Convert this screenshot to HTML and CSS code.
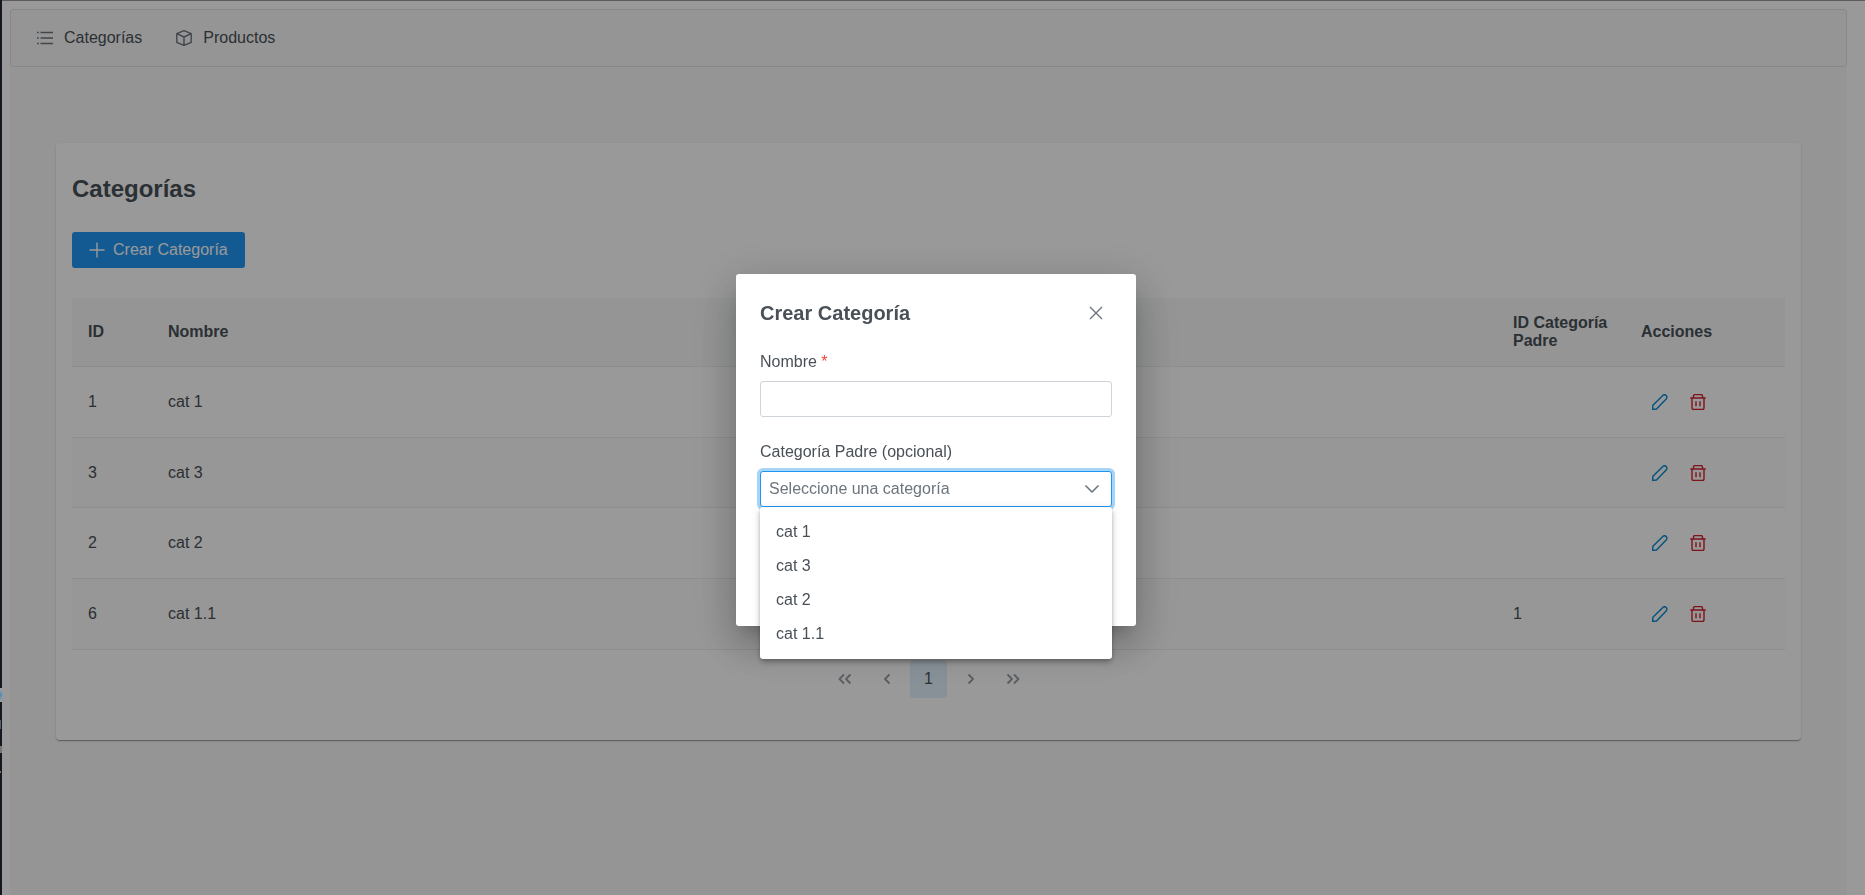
FILE: index.html
```html
<!DOCTYPE html>
<html lang="es">
<head>
<meta charset="utf-8">
<title>Categorías</title>
<link rel="stylesheet" href="styles.css">
</head>
<body>
<svg class="sprite" aria-hidden="true">
  <symbol id="i-list" viewBox="0 0 16 16"><path d="M3.5 2.500h12.500M3.500 8h12.500M3.500 13.500h12.500M0 2.500h1.700M0 8h1.700M0 13.500h1.700"/></symbol>
  <symbol id="i-box" viewBox="0 0 16 16"><path d="M8 .7l7.2 3v8.6L8 15.3l-7.2-3V3.7zM.8 3.7L8 7l7.2-3.300M8 7v8.300"/></symbol>
  <symbol id="i-plus" viewBox="0 0 16 16"><path d="M8 .4v15.200M.4 8h15.200"/></symbol>
  <symbol id="i-pencil" viewBox="0 0 16 16"><path d="M.6 15.400l.3-4.100L11.100 1.200q1.600-1.100 3 .2q1.500 1.400.3 3.300L4.500 15z"/></symbol>
  <symbol id="i-trash" viewBox="0 0 16 16"><path d="M.3 4h15.400M3.500 4V2q0-1.400 1.400-1.400h6.200q1.400 0 1.400 1.400v2M2 4v10q0 1.400 1.400 1.400h9.200q1.400 0 1.400-1.400V4M6 7.200v5M10 7.200v5"/></symbol>
  <symbol id="i-times" viewBox="0 0 16 16"><path d="M2 2l12 12M14 2L2 14"/></symbol>
  <symbol id="i-down" viewBox="0 0 16 16"><path d="M1.500 4.500L8 11l6.500-6.500"/></symbol>
  <symbol id="i-left" viewBox="0 0 16 16"><path d="M10.500 3.500L6 8l4.500 4.500"/></symbol>
  <symbol id="i-right" viewBox="0 0 16 16"><path d="M5.500 3.500L10 8l-4.500 4.500"/></symbol>
  <symbol id="i-first" viewBox="0 0 16 16"><path d="M7 3.500L2.500 8 7 12.500M13.500 3.500L9 8l4.500 4.500"/></symbol>
  <symbol id="i-last" viewBox="0 0 16 16"><path d="M2.500 3.500L7 8l-4.500 4.500M9 3.500L13.500 8 9 12.500"/></symbol>
</svg>
<div class="app">
  <nav class="menubar">
    <a href="#"><svg class="icon"><use href="#i-list"/></svg>Categorías</a>
    <a href="#"><svg class="icon"><use href="#i-box"/></svg>Productos</a>
  </nav>
  <main class="content">
    <section class="card">
      <h1>Categorías</h1>
      <button class="create"><svg class="icon"><use href="#i-plus"/></svg>Crear Categoría</button>
      <table class="table">
        <thead>
          <tr><th class="col-id">ID</th><th>Nombre</th><th class="col-parent">ID Categoría Padre</th><th class="col-actions">Acciones</th></tr>
        </thead>
        <tbody>
          <tr><td>1</td><td>cat 1</td><td></td><td><div class="actions"><button class="edit" aria-label="Editar"><svg class="icon"><use href="#i-pencil"/></svg></button><button class="delete" aria-label="Eliminar"><svg class="icon"><use href="#i-trash"/></svg></button></div></td></tr>
          <tr><td>3</td><td>cat 3</td><td></td><td><div class="actions"><button class="edit" aria-label="Editar"><svg class="icon"><use href="#i-pencil"/></svg></button><button class="delete" aria-label="Eliminar"><svg class="icon"><use href="#i-trash"/></svg></button></div></td></tr>
          <tr><td>2</td><td>cat 2</td><td></td><td><div class="actions"><button class="edit" aria-label="Editar"><svg class="icon"><use href="#i-pencil"/></svg></button><button class="delete" aria-label="Eliminar"><svg class="icon"><use href="#i-trash"/></svg></button></div></td></tr>
          <tr><td>6</td><td>cat 1.1</td><td>1</td><td><div class="actions"><button class="edit" aria-label="Editar"><svg class="icon"><use href="#i-pencil"/></svg></button><button class="delete" aria-label="Eliminar"><svg class="icon"><use href="#i-trash"/></svg></button></div></td></tr>
        </tbody>
      </table>
      <div class="paginator">
        <button aria-label="Primera" disabled><svg class="icon"><use href="#i-first"/></svg></button>
        <button aria-label="Anterior" disabled><svg class="icon"><use href="#i-left"/></svg></button>
        <button class="current">1</button>
        <button aria-label="Siguiente" disabled><svg class="icon"><use href="#i-right"/></svg></button>
        <button aria-label="Última" disabled><svg class="icon"><use href="#i-last"/></svg></button>
      </div>
    </section>
  </main>
</div>
<div class="mask">
  <div class="dialog" role="dialog" aria-labelledby="dialog-title">
    <header class="dialog-header">
      <h2 id="dialog-title">Crear Categoría</h2>
      <button class="close" aria-label="Cerrar"><svg class="icon"><use href="#i-times"/></svg></button>
    </header>
    <div class="field">
      <label for="name">Nombre <span class="required">*</span></label>
      <input id="name" type="text">
    </div>
    <div class="field">
      <label for="parent">Categoría Padre (opcional)</label>
      <div class="dropdown">
        <select id="parent"><option>Seleccione una categoría</option></select>
        <svg class="icon arrow"><use href="#i-down"/></svg>
        <ul class="options" role="listbox">
          <li role="option">cat 1</li>
          <li role="option">cat 3</li>
          <li role="option">cat 2</li>
          <li role="option">cat 1.1</li>
        </ul>
      </div>
    </div>
  </div>
</div>
<div class="edge-left"></div>
<div class="edge-top"></div>
</body>
</html>
```
FILE: styles.css
```css
* { box-sizing: border-box; }
html, body { height: 100%; }
body {
  margin: 0;
  overflow: hidden;
  background: #fff;
  color: #495057;
  font-family: "Liberation Sans", Arial, sans-serif;
  font-size: 16px;
  line-height: 18px;
}
button, input, select { font: inherit; color: inherit; }
button { display: flex; align-items: center; justify-content: center; border: 0; background: none; padding: 0; }
.sprite { position: absolute; width: 0; height: 0; }
.icon { width: 16px; height: 16px; flex: none; fill: none; stroke: currentColor; stroke-width: 1.4; stroke-linejoin: round; }

.app { min-height: 100%; padding: 9px 18px 0 10px; display: flex; flex-direction: column; }
.menubar {
  display: flex;
  align-items: center;
  gap: 2px;
  height: 58px;
  padding: 0 10px;
  background: #f8f9fa;
  border: 1px solid #dee2e6;
  border-radius: 3px;
}
.menubar a { display: flex; align-items: center; gap: 11px; padding: 12px 16px; color: inherit; text-decoration: none; }
.menubar svg { color: #6c757d; }
.content { flex: 1; padding: 76px 46px 0; background: #f8f9fa; }
.card {
  padding: 32px 16px 34px;
  background: #fff;
  border-radius: 4px;
  box-shadow: 0 2px 1px -1px rgba(0, 0, 0, .2), 0 1px 1px 0 rgba(0, 0, 0, .14), 0 1px 3px 0 rgba(0, 0, 0, .12);
}
h1 { margin: 0 0 30px; font-size: 24px; line-height: 27px; }
.create { gap: 8px; height: 36px; padding: 0 17px; background: #2196f3; color: #fff; border-radius: 3px; }

.table { width: 100%; margin-top: 30px; border-collapse: separate; border-spacing: 0; table-layout: fixed; }
.table th, .table td { padding: 0 16px; text-align: left; border-bottom: 1px solid #e9ecef; }
.table th { height: 69px; background: #f8f9fa; }
.table td { height: 71px; }
.table tbody tr:nth-child(even) { background: #fcfcfc; }
.table tbody tr:nth-child(2) td { height: 70px; }
.col-id { width: 80px; }
.col-parent { width: 128px; }
.col-actions { width: 160px; }
.actions { display: flex; }
.actions button { width: 38px; height: 38px; }
.edit { color: #0288d1; }
.delete { color: #d3202c; }
.paginator { display: flex; justify-content: center; gap: 5px; padding: 10px 8px 8px; }
.paginator button { width: 37px; height: 38px; color: #6c757d; border-radius: 3px; }
.paginator button:disabled { opacity: .7; }
.paginator svg { stroke-width: 1.8; }
.paginator .current { background: #e3f2fd; color: #495057; }

.mask {
  position: fixed;
  inset: 0 -5px -5px 2px;
  display: flex;
  align-items: center;
  justify-content: center;
  background: rgba(0, 0, 0, .4);
}
.dialog {
  width: 400px;
  height: 352px;
  padding: 24px;
  background: #fff;
  border-radius: 3px;
  box-shadow: 0 11px 15px -7px rgba(0, 0, 0, .2), 0 24px 38px 3px rgba(0, 0, 0, .14), 0 9px 46px 8px rgba(0, 0, 0, .12);
}
.dialog-header { display: flex; align-items: center; justify-content: space-between; height: 30px; margin-bottom: 25px; }
.dialog-header h2 { margin: 0; font-size: 20px; line-height: 24px; }
.close { width: 32px; height: 32px; color: #6c757d; }
.field { margin-bottom: 26px; }
.field label { display: block; margin-bottom: 10px; }
.required { color: #f44336; }
.field input, .field select { display: block; width: 100%; height: 36px; padding: 0 8px; background: #fff; border: 1px solid #ced4da; border-radius: 3px; outline: 0; }
.dropdown { position: relative; }
.field select { appearance: none; border-color: #2196f3; color: #6c757d; box-shadow: 0 0 0 3px #a6d5fa; }
.arrow { position: absolute; right: 12px; top: 10px; color: #6c757d; stroke-width: 1.6; }
.options {
  position: absolute;
  top: 100%;
  left: 0;
  right: 0;
  margin: 0;
  padding: 8px 0;
  list-style: none;
  background: #fff;
  border-radius: 3px;
  box-shadow: 0 2px 4px -1px rgba(0, 0, 0, .2), 0 4px 5px 0 rgba(0, 0, 0, .14), 0 1px 10px 0 rgba(0, 0, 0, .12);
}
.options li { padding: 8px 16px; }
.edge-left {
  position: fixed;
  inset: 0 auto 0 0;
  width: 2px;
  background:
    linear-gradient(#a9a29a, #4a90b8 50%, #a9a29a) 0 688px / 2px 14px no-repeat,
    linear-gradient(#5b6070, #5b6070) 0 720px / 1px 9px no-repeat,
    linear-gradient(#777, #777) 0 746px / 2px 7px no-repeat,
    linear-gradient(#777, #777) 0 771px / 1px 2px no-repeat,
    #14191f;
}
.edge-top { position: fixed; inset: 0 0 auto 2px; height: 1px; background: #5c5a5c; }
```
